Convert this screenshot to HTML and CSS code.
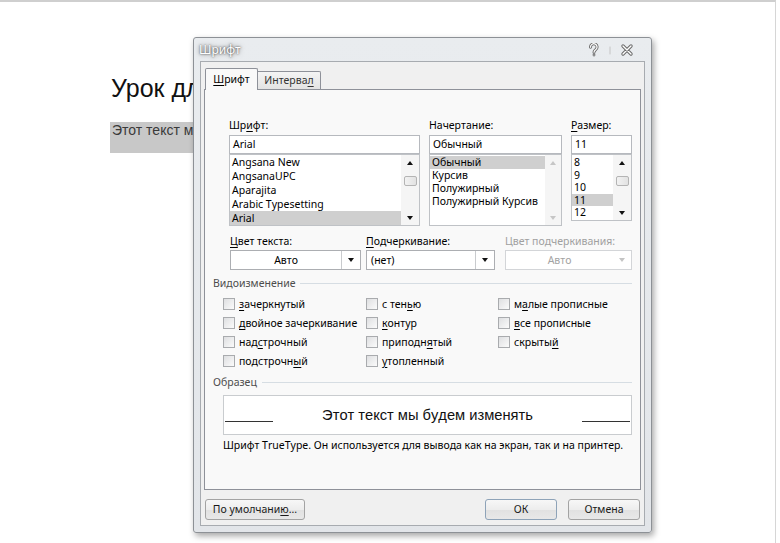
FILE: index.html
```html
<!DOCTYPE html>
<html lang="ru">
<head>
<meta charset="utf-8">
<title>Шрифт</title>
<link rel="stylesheet" href="styles.css">
</head>
<body>
<div class="page">
  <div class="sheet">
    <h1 class="doc-title">Урок дл</h1>
    <p class="doc-mark">Этот текст м</p>
  </div>

  <div class="dialog">
    <div class="titlebar">
      <span class="title">Шрифт</span>
      <svg class="title-icons" width="46" height="14" viewBox="0 0 46 14">
        <g fill="none" stroke-linecap="round">
          <path d="M2.5 4.2 A3.3 3.3 0 1 1 7.6 6.8 C6.6 7.5 6 8 6 9.2" stroke="#6a6a6a" stroke-width="3"/>
          <path d="M2.5 4.2 A3.3 3.3 0 1 1 7.6 6.8 C6.6 7.5 6 8 6 9.2" stroke="#fff" stroke-width="1.2"/>
          <circle cx="6" cy="12" r="1.4" fill="#6a6a6a" stroke="none"/>
          <circle cx="6" cy="12" r="0.6" fill="#fff" stroke="none"/>
          <line x1="22" y1="4" x2="22" y2="11" stroke="#c4c4c4" stroke-width="1"/>
          <path d="M35 3 L43 11 M43 3 L35 11" stroke="#6a6a6a" stroke-width="3.4"/>
          <path d="M35 3 L43 11 M43 3 L35 11" stroke="#fff" stroke-width="1.4"/>
        </g>
      </svg>
    </div>

    <div class="client">
      <div class="tabs">
        <div class="tab tab-active"><span class="u">Ш</span>рифт</div>
        <div class="tab">Интерва<span class="u">л</span></div>
      </div>

      <div class="panel">
        <div class="font-grid">
          <div class="fcol">
            <div class="lbl">Шр<span class="u">и</span>фт:</div>
            <div class="inp">Arial</div>
            <div class="list list-font">
              <div class="items">
                <div class="item">Angsana New</div>
                <div class="item">AngsanaUPC</div>
                <div class="item">Aparajita</div>
                <div class="item">Arabic Typesetting</div>
                <div class="item sel">Arial</div>
              </div>
              <div class="sb">
                <div class="sb-btn"><span class="tri-up"></span></div>
                <div class="sb-track"><div class="thumb"></div></div>
                <div class="sb-btn"><span class="tri-down"></span></div>
              </div>
            </div>
          </div>
          <div class="fcol">
            <div class="lbl">Начертание:</div>
            <div class="inp">Обычный</div>
            <div class="list list-style">
              <div class="items">
                <div class="item sel">Обычный</div>
                <div class="item">Курсив</div>
                <div class="item">Полужирный</div>
                <div class="item">Полужирный Курсив</div>
              </div>
              <div class="sb sb-off">
                <div class="sb-btn"><span class="tri-up"></span></div>
                <div class="sb-track"></div>
                <div class="sb-btn"><span class="tri-down"></span></div>
              </div>
            </div>
          </div>
          <div class="fcol">
            <div class="lbl"><span class="u">Р</span>азмер:</div>
            <div class="inp">11</div>
            <div class="list list-size">
              <div class="items">
                <div class="item">8</div>
                <div class="item">9</div>
                <div class="item">10</div>
                <div class="item sel">11</div>
                <div class="item">12</div>
              </div>
              <div class="sb">
                <div class="sb-btn"><span class="tri-up"></span></div>
                <div class="sb-track"><div class="thumb"></div></div>
                <div class="sb-btn"><span class="tri-down"></span></div>
              </div>
            </div>
          </div>
        </div>

        <div class="combo-row">
          <div class="ccol ccol-1">
            <div class="lbl"><span class="u">Ц</span>вет текста:</div>
            <div class="combo">
              <span class="combo-val center">Авто</span>
              <span class="combo-arrow split"><span class="tri-down"></span></span>
            </div>
          </div>
          <div class="ccol ccol-2">
            <div class="lbl"><span class="u">П</span>одчеркивание:</div>
            <div class="combo">
              <span class="combo-val">(нет)</span>
              <span class="combo-arrow split"><span class="tri-down"></span></span>
            </div>
          </div>
          <div class="ccol ccol-3">
            <div class="lbl off">Цвет подчеркивания:</div>
            <div class="combo combo-off">
              <span class="combo-val center">Авто</span>
              <span class="combo-arrow"><span class="tri-down"></span></span>
            </div>
          </div>
        </div>

        <div class="group-head"><span>Видоизменение</span><i class="rule"></i></div>

        <div class="checks">
          <label class="chk"><span class="box"></span><span><span class="u">з</span>ачеркнутый</span></label>
          <label class="chk"><span class="box"></span><span><span class="u">д</span>войное зачеркивание</span></label>
          <label class="chk"><span class="box"></span><span>над<span class="u">с</span>трочный</span></label>
          <label class="chk"><span class="box"></span><span>подстрочн<span class="u">ы</span>й</span></label>
          <label class="chk"><span class="box"></span><span>с тен<span class="u">ь</span>ю</span></label>
          <label class="chk"><span class="box"></span><span><span class="u">к</span>онтур</span></label>
          <label class="chk"><span class="box"></span><span>приподн<span class="u">я</span>тый</span></label>
          <label class="chk"><span class="box"></span><span><span class="u">у</span>топленный</span></label>
          <label class="chk"><span class="box"></span><span>м<span class="u">а</span>лые прописные</span></label>
          <label class="chk"><span class="box"></span><span><span class="u">в</span>се прописные</span></label>
          <label class="chk"><span class="box"></span><span>скрыты<span class="u">й</span></span></label>
        </div>

        <div class="group-head group-sample"><span>Образец</span><i class="rule"></i></div>

        <div class="sample">
          <i class="sample-line"></i>
          <span class="sample-text">Этот текст мы будем изменять</span>
          <i class="sample-line"></i>
        </div>

        <div class="note">Шрифт TrueType. Он используется для вывода как на экран, так и на принтер.</div>
      </div>

      <div class="buttons">
        <button class="btn btn-default-set">По умолчани<span class="u">ю</span>...</button>
        <span class="spacer"></span>
        <button class="btn btn-ok">ОК</button>
        <button class="btn">Отмена</button>
      </div>
    </div>
  </div>
</div>
</body>
</html>
```

FILE: styles.css
```css
html, body {
  margin: 0;
  padding: 0;
  background: #ffffff;
}

.page {
  position: relative;
  width: 780px;
  height: 543px;
  overflow: hidden;
  background: #ffffff;
}

.sheet {
  box-sizing: border-box;
  width: 776px;
  height: 543px;
  border-top: 2px solid #cfcfcf;
  border-right: 1px solid #d6d6d6;
  padding: 71px 0 0 111px;
  font-family: "Liberation Sans", Arial, sans-serif;
}

.doc-title {
  margin: 0;
  font-size: 25px;
  line-height: 30px;
  font-weight: normal;
  color: #111111;
  white-space: nowrap;
}

.doc-mark {
  margin: 19px 0 0 -1px;
  width: 88px;
  padding: 0 0 14px 2px;
  background: #c8c8c8;
  color: #3a3a3a;
  font-size: 14px;
  line-height: 17px;
  white-space: nowrap;
}

/* ---------- dialog window ---------- */
.dialog {
  position: absolute;
  left: 193px;
  top: 37px;
  width: 459px;
  height: 496px;
  box-sizing: border-box;
  border: 1px solid #8d9196;
  border-radius: 3px;
  background: linear-gradient(#e9ecef, #e2e5e9);
  box-shadow: 2px 3px 6px rgba(0, 0, 0, 0.35);
  display: flex;
  flex-direction: column;
  font-family: "Noto Sans", "Open Sans", sans-serif;
  font-size: 10.5px;
  font-kerning: none;
  color: #000000;
}

.titlebar {
  height: 23px;
  display: flex;
  align-items: center;
  padding: 0 17px 0 5px;
}

.title {
  color: #ffffff;
  font-size: 12px;
  text-shadow: 0 0 2px #3a3a3a, 0 0 5px rgba(0, 0, 0, 0.55);
}

.title-icons {
  margin-left: auto;
  display: block;
}

.client {
  flex: 1;
  margin: 0 6px 6px 6px;
  border: 1px solid #a7abb0;
  background: #f0f0f0;
  display: flex;
  flex-direction: column;
}

.u {
  text-decoration: underline;
  text-underline-offset: 2px;
}

/* ---------- tabs ---------- */
.tabs {
  display: flex;
  align-items: flex-end;
  padding: 6px 0 0 4px;
  margin-bottom: -1px;
  position: relative;
  z-index: 1;
}

.tab {
  box-sizing: border-box;
  width: 63px;
  height: 18px;
  margin-bottom: 1px;
  border: 1px solid #8e9199;
  border-bottom: none;
  border-left: none;
  border-radius: 0 2px 0 0;
  background: linear-gradient(#f4f4f4, #e3e3e3);
  color: #333333;
  text-align: center;
  line-height: 17px;
}

.tab-active {
  width: 53px;
  height: 22px;
  margin-bottom: 0;
  border-left: 1px solid #8e9199;
  border-radius: 2px 2px 0 0;
  background: #f9f9f9;
  color: #000000;
  line-height: 21px;
}

/* ---------- panel ---------- */
.panel {
  box-sizing: border-box;
  height: 401px;
  margin: 0 3px;
  border: 1px solid #8e9199;
  background: #f9f9f9;
  padding: 27px 8px 0 8px;
}

.lbl {
  line-height: 16px;
  height: 16px;
  margin-bottom: 2px;
  white-space: nowrap;
}

.lbl.off {
  color: #a0a0a0;
}

.font-grid {
  display: grid;
  grid-template-columns: 191px 133px 61px;
  column-gap: 9px;
  margin-left: 16px;
  align-items: start;
}

.inp {
  box-sizing: border-box;
  height: 19px;
  border: 1px solid #b6b9be;
  background: #ffffff;
  padding: 0 3px;
  line-height: 17px;
  white-space: nowrap;
}

.list {
  box-sizing: border-box;
  border: 1px solid #bfc2c6;
  background: #ffffff;
  display: flex;
}

.list-font { height: 72px; }
.list-style { height: 72px; }
.list-size { height: 67px; }

.items {
  flex: 1;
  min-width: 0;
}

.item {
  height: 14px;
  line-height: 14px;
  padding-left: 2px;
  white-space: nowrap;
}

.list-style .items { padding-top: 1px; }
.list-style .item { height: 13px; line-height: 13px; }
.list-size .items { padding-top: 1px; }
.list-size .item { height: 12.5px; line-height: 12.5px; }

.item.sel {
  background: #cfcfcf;
}

.sb {
  width: 18px;
  display: flex;
  flex-direction: column;
  align-items: center;
  background: #f5f5f5;
}

.list-style .sb {
  width: 16px;
}

.sb-btn {
  height: 15px;
  width: 100%;
  display: flex;
  align-items: center;
  justify-content: center;
}

.sb-track {
  flex: 1;
  width: 100%;
  display: flex;
  justify-content: center;
}

.thumb {
  box-sizing: border-box;
  width: 13px;
  height: 10px;
  margin-top: 6px;
  border: 1px solid #b4b4b4;
  border-radius: 2px;
  background: linear-gradient(90deg, #f2f2f2, #e2e2e2);
}

.tri-up,
.tri-down {
  display: block;
  width: 0;
  height: 0;
  border-left: 3.5px solid transparent;
  border-right: 3.5px solid transparent;
}

.tri-up { border-bottom: 4px solid #111111; }
.tri-down { border-top: 4px solid #111111; }

.sb-off .tri-up { border-bottom-color: #c6c6c6; }
.sb-off .tri-down { border-top-color: #c6c6c6; }

/* ---------- combos ---------- */
.combo-row {
  display: flex;
  margin: 7px 0 0 17px;
}

.ccol-1 { width: 131px; }
.ccol-2 { width: 129px; margin-left: 5px; }
.ccol-3 { width: 127px; margin-left: 10px; }

.ccol .lbl {
  margin-bottom: 1px;
}

.combo {
  box-sizing: border-box;
  height: 20px;
  border: 1px solid #acaeb2;
  background: #ffffff;
  display: flex;
  align-items: stretch;
}

.combo-val {
  flex: 1;
  line-height: 18px;
  padding-left: 4px;
  white-space: nowrap;
}

.combo-val.center {
  text-align: center;
  padding-left: 0;
}

.combo-arrow {
  width: 18px;
  display: flex;
  align-items: center;
  justify-content: center;
}

.combo-arrow.split {
  border-left: 1px solid #c9cbce;
}

.combo-off {
  border-color: #d3d5d8;
}

.combo-off .combo-val {
  color: #a3a3a3;
}

.combo-off .tri-down {
  border-top-color: #c4c4c4;
}

/* ---------- group headings ---------- */
.group-head {
  display: flex;
  align-items: center;
  margin-top: 6px;
  height: 14px;
  line-height: 14px;
  color: #4d4d4d;
}

.group-head .rule {
  flex: 1;
  height: 1px;
  margin-left: 5px;
  background: #d6dde3;
}

.group-sample {
  margin-top: 5px;
}

/* ---------- checkboxes ---------- */
.checks {
  display: grid;
  grid-template-columns: 143px 132px 1fr;
  grid-template-rows: repeat(4, 19px);
  grid-auto-flow: column;
  margin: 4px 0 0 10px;
}

.chk {
  display: flex;
  align-items: center;
  white-space: nowrap;
}

.box {
  box-sizing: border-box;
  width: 12px;
  height: 12px;
  margin-right: 4px;
  border: 1px solid #a9abae;
  background: linear-gradient(135deg, #dedfe1, #fbfbfb);
  flex: none;
}

/* ---------- sample ---------- */
.sample {
  box-sizing: border-box;
  height: 40px;
  margin: 6px 0 0 10px;
  border: 1px solid #c9cccf;
  background: #ffffff;
  display: flex;
  align-items: center;
  padding: 0 1px;
}

.sample-line {
  display: block;
  width: 48px;
  height: 13px;
  box-sizing: border-box;
  border-bottom: 1px solid #333333;
  flex: none;
}

.sample-text {
  flex: 1;
  text-align: center;
  font-family: "Liberation Sans", Arial, sans-serif;
  font-size: 14.7px;
  line-height: 18px;
  color: #111111;
}

.note {
  margin: 3px 0 0 10px;
  line-height: 14px;
  white-space: nowrap;
}

/* ---------- buttons ---------- */
.buttons {
  display: flex;
  padding: 0 4px;
  margin-top: 9px;
}

.spacer {
  flex: 1;
}

.btn {
  box-sizing: border-box;
  height: 21px;
  width: 72px;
  padding: 0;
  border: 1px solid #a3a3a3;
  border-radius: 3px;
  background: linear-gradient(#f7f7f7 0%, #ededed 50%, #e1e1e1 51%, #e8e8e8 100%);
  font-family: "Noto Sans", "Open Sans", sans-serif;
  font-size: 10.5px;
  font-kerning: none;
  color: #1a1a1a;
  line-height: 19px;
}

.btn-default-set {
  width: 100px;
}

.btn-ok {
  margin-right: 11px;
  border-color: #8ea3b8;
}
```
